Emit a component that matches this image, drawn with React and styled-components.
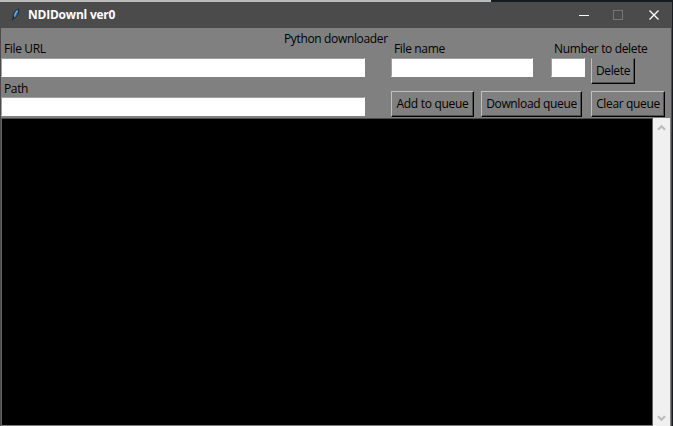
import React from "react";
import styled, { createGlobalStyle } from "styled-components";

const Global = createGlobalStyle`
  * { box-sizing: border-box; }
  body { margin: 0; background: #171b22; overflow: hidden; }
`;

const Desktop = styled.div`
  width: 673px;
  height: 426px;
  padding-top: 2px;
  background: linear-gradient(90deg, #bcbcbc 491px, #171b22 491px) 0 0 / 100% 2px no-repeat, #171b22;
  font-family: "Open Sans", "Noto Sans", sans-serif;
  font-size: 12px;
  color: #000;
`;

const Window = styled.div`
  width: 672px;
  height: 424px;
  display: flex;
  flex-direction: column;
  background: #808080;
  border: solid #4b4b4b;
  border-width: 0 1px;
`;

const TitleBar = styled.header`
  height: 26px;
  flex: none;
  display: flex;
  align-items: center;
  padding-left: 7px;
  background: #4b4b4b;
`;

const Text = styled.span`
  display: block;
  flex: none;
  width: max-content;
  white-space: nowrap;
  line-height: 17px;
  letter-spacing: ${(p) => p.$track ?? -0.35}px;
`;

const AppName = styled(Text)`
  margin: 0 0 1px 7px;
  color: #fff;
  font-weight: 700;
  flex: 1;
`;

const Controls = styled.div`
  display: flex;
  gap: 22px;
  margin-right: 11px;
`;

const Form = styled.main`
  height: 90px;
  flex: none;
`;

const Heading = styled.div`
  height: 12px;
  padding: 2px 0 0 283px;
`;

const Columns = styled.div`
  display: flex;
  gap: 26px;
`;

const Column = styled.div`
  width: ${(p) => p.$width}px;
`;

const Row = styled.div`
  display: flex;
  align-items: flex-end;
`;

const Field = styled.label`
  display: flex;
  flex-direction: column;
  justify-content: flex-end;
  width: ${(p) => p.$width}px;
  height: ${(p) => p.$height || 37}px;
  margin-right: ${(p) => p.$after || 0}px;
  ${Text} { margin-left: 3px; height: ${(p) => (p.$height ? 17 : 18)}px; }
`;

const Entry = styled.input`
  display: block;
  width: 100%;
  height: 19px;
  flex: none;
  padding: 0 2px;
  border: 1px solid #fff;
  border-top-color: #a0a0a0;
  border-left-color: #a0a0a0;
  border-radius: 0;
  background: #fff;
  outline: none;
  font: inherit;
`;

const Button = styled.button`
  width: ${(p) => p.$width}px;
  height: 26px;
  flex: none;
  display: flex;
  align-items: center;
  justify-content: center;
  padding: 0 0 1px;
  border: 1px solid #c0c0c0;
  border-right-color: #000;
  border-bottom-color: #000;
  border-radius: 0;
  box-shadow: inset -1px -1px 0 #505050;
  background: #808080;
  color: #000;
  font: inherit;
`;

const DeleteButton = styled(Button)`
  margin-bottom: -7px;
  border-top-color: #808080;
`;

const Actions = styled.div`
  display: flex;
  margin-top: 14px;
`;

const ActionButton = styled(Button)`
  margin-right: ${(p) => p.$after || 0}px;
`;

const Output = styled.section`
  flex: 1;
  display: flex;
`;

const Console = styled.div`
  width: 652px;
  background: #000;
  border: 1px solid #646464;
  border-top-color: #4b4b4b;
  border-bottom-color: #808080;
`;

const ScrollBar = styled.div`
  width: 17px;
  display: flex;
  flex-direction: column;
  justify-content: space-between;
  align-items: center;
  padding: 6px 0 4px;
  background: #f0f0f0;
`;

const Chevron = ({ down }) => (
  <svg width="9" height="7" viewBox="0 0 9 7" fill="none" stroke="#bcbcbc" strokeWidth="2.2">
    <path d={down ? "M1 1.2 4.5 4.7 8 1.2" : "M1 5.8 4.5 2.3 8 5.8"} />
  </svg>
);

const Feather = () => (
  <svg width="13" height="16" viewBox="0 0 13 16">
    <path d="M10.8 2C7 3 5 6 5 10.5L6 11.5C9.3 10 11 6 10.8 2Z" fill="#3469a4" stroke="#202c3a" strokeWidth="1" />
    <path d="M9.5 3.5C8 5 7 7 6.5 10" fill="none" stroke="#79b5ec" strokeWidth="1.1" />
    <path d="M6 9 4.3 13.5" fill="none" stroke="#182431" strokeWidth="1" />
  </svg>
);

const LabeledField = ({ label, ...rest }) => (
  <Field {...rest}>
    <Text>{label}</Text>
    <Entry />
  </Field>
);

export default function App() {
  return (
    <Desktop>
      <Global />
      <Window>
        <TitleBar>
          <Feather />
          <AppName $track={-0.22}>NDIDownl ver0</AppName>
          <Controls>
            <svg width="14" height="12" viewBox="0 0 14 12" shapeRendering="crispEdges">
              <path d="M2 6.5H12" stroke="#fff" />
            </svg>
            <svg width="10" height="12" viewBox="0 0 10 12" shapeRendering="crispEdges">
              <path d="M.5 1.5H9.5V10.5H.5Z" fill="none" stroke="#757575" />
            </svg>
            <svg width="15" height="12" viewBox="-3 0 15 12">
              <path d="M1.5 1.5 10.5 10.5M10.5 1.5 1.5 10.5" stroke="#fff" strokeWidth="1.3" />
            </svg>
          </Controls>
        </TitleBar>
        <Form>
          <Heading><Text>Python downloader</Text></Heading>
          <Columns>
            <Column $width={364}>
              <LabeledField label="File URL" $width={364} />
              <LabeledField label="Path" $width={364} $height={39} />
            </Column>
            <Column $width={279}>
              <Row>
                <LabeledField label="File name" $width={142} $after={18} />
                <LabeledField label="Number to delete" $width={34} $after={6} />
                <DeleteButton $width={44}><Text>Delete</Text></DeleteButton>
              </Row>
              <Actions>
                <ActionButton $width={83} $after={7}><Text $track={-0.3}>Add to queue</Text></ActionButton>
                <ActionButton $width={101} $after={9}><Text>Download queue</Text></ActionButton>
                <ActionButton $width={74}><Text>Clear queue</Text></ActionButton>
              </Actions>
            </Column>
          </Columns>
        </Form>
        <Output>
          <Console />
          <ScrollBar>
            <Chevron />
            <Chevron down />
          </ScrollBar>
        </Output>
      </Window>
    </Desktop>
  );
}
